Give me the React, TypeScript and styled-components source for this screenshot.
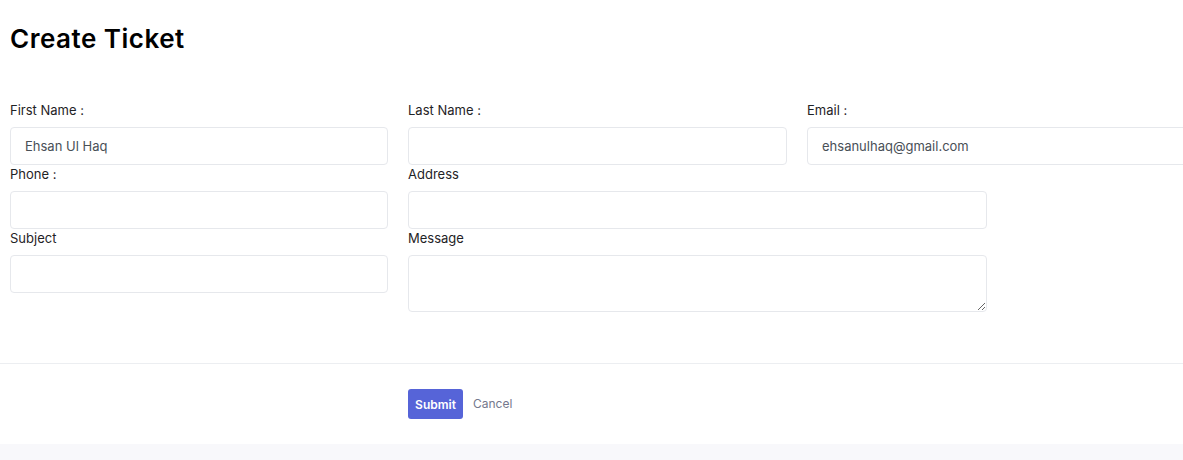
import React from 'react';
import styled, { createGlobalStyle } from 'styled-components';

const GlobalStyle = createGlobalStyle`
  html, body {
    margin: 0;
    padding: 0;
    background: #ffffff;
    overflow: hidden;
  }
  body {
    font-family: Inter, "Open Sans", "Liberation Sans", sans-serif;
    color: #212529;
  }
`;

const Page = styled.div`
  width: 1183px;
  height: 460px;
  display: flex;
  flex-direction: column;
  background: #f8f8fb;
  overflow: hidden;
`;

const Card = styled.div`
  background: #ffffff;
  display: flex;
  flex-direction: column;
`;

const Title = styled.h1`
  margin: 0;
  padding: 23px 10px 0;
  font-size: 26px;
  line-height: 32px;
  font-weight: 600;
  color: #000000;
  letter-spacing: 0.5px;
`;

const FormGrid = styled.div`
  display: grid;
  grid-template-columns: 378px 379px 380px;
  column-gap: 20px;
  padding: 46px 10px 51px;
  width: 1200px;
`;

const Field = styled.div<{ $span?: number }>`
  display: flex;
  flex-direction: column;
  grid-column: span ${p => p.$span ?? 1};
`;

const Label = styled.label`
  font-size: 13px;
  line-height: 20px;
  font-weight: 400;
  color: #1f2326;
  margin-bottom: 6px;
  margin-top: -1px;
  padding-bottom: 1px;
`;

const inputBase = `
  box-sizing: border-box;
  border: 1px solid #e6e8ec;
  border-radius: 4px;
  background: #ffffff;
  font-family: inherit;
  font-size: 13px;
  color: #495057;
  padding: 0 14px;
  outline: none;
`;

const Input = styled.input<{ $width?: number }>`
  ${inputBase}
  height: 38px;
  width: ${p => (p.$width ? `${p.$width}px` : '100%')};
`;

const TextArea = styled.textarea<{ $width?: number }>`
  ${inputBase}
  height: 57px;
  padding-top: 8px;
  width: ${p => (p.$width ? `${p.$width}px` : '100%')};
  resize: vertical;
`;

const Divider = styled.hr`
  margin: 0;
  border: 0;
  border-top: 1px solid #eceef1;
`;

const Footer = styled.div`
  display: flex;
  align-items: center;
  gap: 10px;
  padding: 25px 0 25px 408px;
`;

const SubmitButton = styled.button`
  height: 30px;
  width: 55px;
  border: 0;
  border-radius: 3px;
  background: #5664d8;
  color: #ffffff;
  font-family: inherit;
  font-size: 12px;
  font-weight: 600;
  cursor: pointer;
`;

const CancelLink = styled.a`
  font-size: 12px;
  line-height: 14px;
  margin-top: -1px;
  color: #74788d;
  cursor: pointer;
`;

export default function App() {
  return (
    <>
      <GlobalStyle />
      <Page>
        <Card>
          <Title>Create Ticket</Title>
          <FormGrid>
            <Field>
              <Label>First Name :</Label>
              <Input defaultValue="Ehsan Ul Haq" />
            </Field>
            <Field>
              <Label>Last Name :</Label>
              <Input />
            </Field>
            <Field>
              <Label>Email :</Label>
              <Input defaultValue="ehsanulhaq@gmail.com" />
            </Field>

            <Field>
              <Label>Phone :</Label>
              <Input />
            </Field>
            <Field $span={2}>
              <Label>Address</Label>
              <Input $width={579} />
            </Field>

            <Field>
              <Label>Subject</Label>
              <Input />
            </Field>
            <Field $span={2}>
              <Label>Message</Label>
              <TextArea $width={579} />
            </Field>
          </FormGrid>
          <Divider />
          <Footer>
            <SubmitButton>Submit</SubmitButton>
            <CancelLink>Cancel</CancelLink>
          </Footer>
        </Card>
      </Page>
    </>
  );
}
